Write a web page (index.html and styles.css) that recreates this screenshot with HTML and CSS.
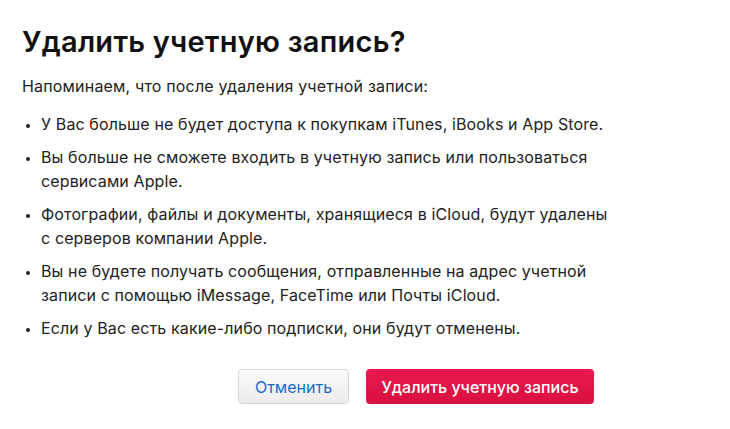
FILE: index.html
```html
<!DOCTYPE html>
<html lang="ru">
  <head>
    <meta charset="UTF-8">
    <meta name="viewport" content="width=device-width, initial-scale=1.0">
    <title>Удалить учетную запись?</title>
    <link rel="stylesheet" href="styles.css">
  </head>
  <body>
    <div class="dialog">
      <h1 class="title">Удалить учетную запись?</h1>
      <p class="lead">Напоминаем, что после удаления учетной записи:</p>
      <ul class="points">
        <li>У Вас больше не будет доступа к покупкам iTunes, iBooks и App Store.</li>
        <li>Вы больше не сможете входить в учетную запись или пользоваться<br>сервисами Apple.</li>
        <li>Фотографии, файлы и документы, хранящиеся в iCloud, будут удалены<br>с серверов компании Apple.</li>
        <li>Вы не будете получать сообщения, отправленные на адрес учетной<br>записи с помощью iMessage, FaceTime или Почты iCloud.</li>
        <li>Если у Вас есть какие-либо подписки, они будут отменены.</li>
      </ul>
      <div class="actions">
        <button class="btn btn-cancel">Отменить</button>
        <button class="btn btn-delete">Удалить учетную запись</button>
      </div>
    </div>
  </body>
</html>
```

FILE: styles.css
```css
body {
    margin: 0;
    background: #fff;
    font-family: Inter, "Noto Sans", sans-serif;
    color: #222;
}
.dialog {
    padding: 24px 22px 0;
}
.title {
    margin: 0;
    font-size: 29px;
    font-weight: 600;
    line-height: 36px;
    color: #111;
    letter-spacing: 0.25px;
}
.lead {
    margin: 14px 0 0;
    font-size: 16px;
    line-height: 24px;
    letter-spacing: 0.18px;
}
.points {
    margin: 14px 0 0;
    padding: 0 0 0 19px;
    font-size: 16px;
    line-height: 24px;
    letter-spacing: 0.12px;
}
.points li {
    margin-bottom: 9px;
}
.points li::marker {
    font-size: 13px;
}
.actions {
    display: flex;
    gap: 17px;
    margin-top: 29px;
    padding-left: 216px;
}
.btn {
    height: 35px;
    border-radius: 4px;
    font-family: inherit;
    font-size: 16px;
    cursor: pointer;
}
.btn-cancel {
    width: 111px;
    border: 1px solid #d6d6d6;
    background: linear-gradient(#fbfbfb, #ececec);
    color: #1a6bcb;
}
.btn-delete {
    width: 228px;
    border: none;
    background: linear-gradient(#e8184f, #d9113f);
    color: #fff;
    font-weight: 500;
}
```
